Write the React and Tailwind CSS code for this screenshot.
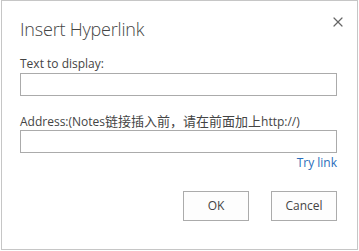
import { X } from "lucide-react";

export default function App() {
  return (
    <div className="w-[359px] h-[251px] bg-white" style={{ fontFamily: '"Open Sans", "Noto Sans CJK SC", sans-serif' }}>
      <div className="ml-px w-[357px] h-[250px] border border-[#c6c6c6] bg-white flex flex-col pl-[18px] pr-[20px]">
        {/* Header */}
        <div className="flex items-start justify-between pt-[16px]">
          <h1 className="text-[18px] leading-[24px] font-light text-[#444] tracking-[-0.2px]">Insert Hyperlink</h1>
          <button type="button" className="mt-[-3px] mr-[-9px] text-[#666]">
            <X size={16} strokeWidth={1.8} />
          </button>
        </div>

        {/* Text to display */}
        <label className="mt-[15px] text-[12px] leading-[16px] text-[#444]">Text to display:</label>
        <input className="mt-[1px] w-[317px] h-[23px] border border-[#ababab] bg-white outline-none" />

        {/* Address */}
        <label className="mt-[17px] text-[12px] leading-[16px] text-[#444] whitespace-nowrap">
          Address:(Notes<span className="text-[13px]">链接插入前，请在前面加上</span>http://)
        </label>
        <input className="mt-0 w-[317px] h-[23px] border border-[#ababab] bg-white outline-none" />
        <div className="w-[317px] flex justify-end mt-[2px]">
          <a className="text-[12px] leading-[16px] text-[#2a6ebb]">Try link</a>
        </div>

        {/* Buttons */}
        <div className="w-[317px] flex justify-end gap-[22px] mt-[20px]">
          <button type="button" className="w-[66px] h-[30px] border border-[#ababab] bg-[#fdfdfd] text-[12px] text-[#444]">OK</button>
          <button type="button" className="w-[66px] h-[30px] border border-[#ababab] bg-[#fdfdfd] text-[12px] text-[#444]">Cancel</button>
        </div>
      </div>
    </div>
  );
}
